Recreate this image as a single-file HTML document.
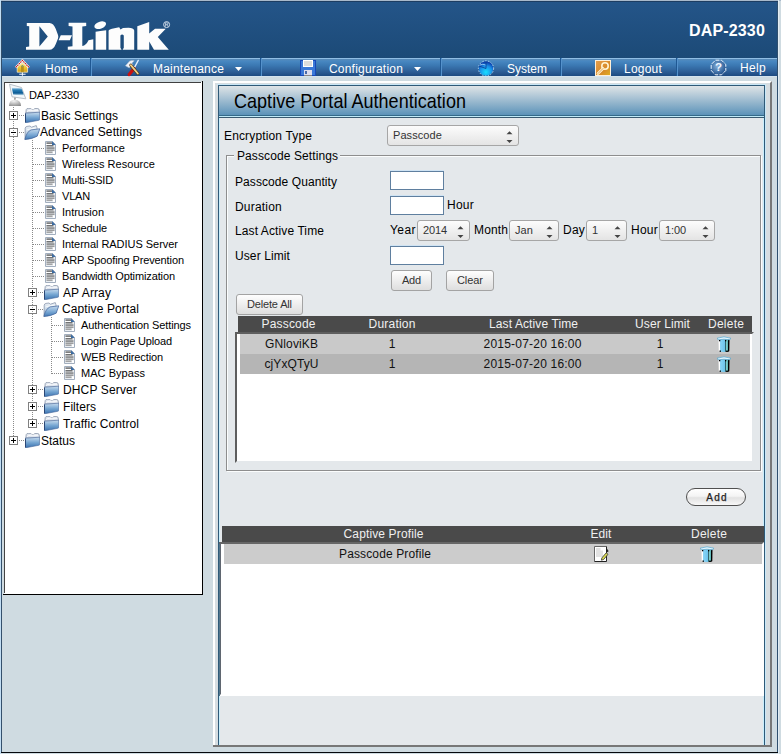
<!DOCTYPE html>
<html><head><meta charset="utf-8">
<style>
html,body{margin:0;padding:0;}
body{width:781px;height:754px;position:relative;overflow:hidden;background:#cfdbe1;font-family:"Liberation Sans",sans-serif;color:#000;}
.a{position:absolute;box-sizing:border-box;}
.t{position:absolute;white-space:nowrap;line-height:1;}
svg{position:absolute;overflow:visible;}
</style></head><body>

<div class="a" style="left:0px;top:0px;width:781px;height:1px;background:#a9b9cb"></div>
<div class="a" style="left:0px;top:0px;width:1px;height:754px;background:#c2def4"></div>
<div class="a" style="left:1px;top:1px;width:1px;height:752px;background:#34506c"></div>
<div class="a" style="left:777px;top:1px;width:1px;height:752px;background:#2f4f6e"></div>
<div class="a" style="left:778px;top:0px;width:1px;height:754px;background:#e2edf4"></div>
<div class="a" style="left:1px;top:752px;width:777px;height:1px;background:#05080c"></div>
<div class="a" style="left:2px;top:1px;width:775px;height:57px;background:linear-gradient(#245589,#1c4a77)"></div>
<div class="a" style="left:1px;top:1px;width:777px;height:1px;background:#1d3d62"></div>
<svg style="left:0;top:0" width="200" height="58" viewBox="0 0 200 58">
<g fill="#fdfdfd" fill-rule="evenodd">
<path d="M26.8 23 L49.5 23 Q53.5 23.2 55.8 29 L58 35 Q58.6 36.8 58 38.6 L55.8 44 Q53.5 49.8 49.5 49.8 L26 49.8 L26 47 L29.2 46.6 L29.2 26.3 L26.8 26 Z M39.4 26.3 L39.4 46.4 L47.8 36.5 Z"/>
<path d="M60.8 35.3 L72 35.3 L69.8 40.3 L58.6 40.3 Z"/>
<path d="M68.6 22.8 L86.2 22.8 L86.2 25.9 L82.3 26.4 L82.3 46 Q86 45.5 88.5 40.2 L93.3 39.3 L93.3 49.8 L67.8 49.8 L67.8 46.8 L72.5 46.3 L72.5 26.4 L68.6 25.9 Z"/>
<path d="M95.6 31.8 Q100 31 106.2 30.2 L106.2 49.8 L95.6 49.8 Z"/>
<ellipse cx="100.2" cy="25.2" rx="6.1" ry="3.5" transform="rotate(-20 100.2 25.2)"/>
<path d="M108.6 31 L108.6 49.7 L134.2 49.7 L134.2 30.5 Q133.5 27.8 128.5 27.8 L123 28 L120.5 29.5 L119.2 27.3 L112 28.8 Q108.6 29.5 108.6 31 Z M120.4 35.6 Q122.1 33.4 123.8 35.6 L123.8 47.8 L122.6 49.7 L121.6 49.7 L120.4 47.8 Z"/>
<path d="M137.3 26.3 L149.2 21.9 L149.2 33.5 L155 28.7 L165.8 28.7 L157.8 37 L168.8 49.7 L154 49.7 L149.2 41.5 L149.2 49.7 L137.3 49.7 Z"/>
</g>
<circle cx="166.6" cy="24.6" r="3" fill="none" stroke="#dfe8f2" stroke-width="0.9"/>
<path d="M165.4 26.6 L165.4 22.8 L167 22.8 Q168 22.9 168 23.8 Q168 24.7 167 24.7 L165.4 24.7 M166.8 24.7 L168 26.6" fill="none" stroke="#dfe8f2" stroke-width="0.7"/>
</svg>
<div class="t" style="left:689px;top:23px;font-size:16px;color:#fff;letter-spacing:0.156px;font-weight:bold">DAP-2330</div>
<div class="a" style="left:2px;top:58px;width:775px;height:18px;background:linear-gradient(#5a8ab6 1px,#4888c2 3px,#3c7ab4 7px,#2c5c94 14px,#1d4a80 18px)"></div>
<div class="a" style="left:2px;top:58px;width:775px;height:1px;background:#90bde3"></div>
<div class="a" style="left:2px;top:76px;width:775px;height:1px;background:#d4e3ee"></div>
<div class="a" style="left:90px;top:58px;width:1px;height:18px;background:#1f5893"></div>
<div class="a" style="left:91px;top:58px;width:1px;height:18px;background:#5592cc"></div>
<div class="a" style="left:260px;top:58px;width:1px;height:18px;background:#1f5893"></div>
<div class="a" style="left:261px;top:58px;width:1px;height:18px;background:#5592cc"></div>
<div class="a" style="left:440px;top:58px;width:1px;height:18px;background:#1f5893"></div>
<div class="a" style="left:441px;top:58px;width:1px;height:18px;background:#5592cc"></div>
<div class="a" style="left:560px;top:58px;width:1px;height:18px;background:#1f5893"></div>
<div class="a" style="left:561px;top:58px;width:1px;height:18px;background:#5592cc"></div>
<div class="a" style="left:676px;top:58px;width:1px;height:18px;background:#1f5893"></div>
<div class="a" style="left:677px;top:58px;width:1px;height:18px;background:#5592cc"></div>
<svg style="left:14px;top:59px" width="18" height="18" viewBox="0 0 18 18">
<defs><linearGradient id="ghouse" x1="0" y1="0" x2="0" y2="1"><stop offset="0" stop-color="#fff6c0"/><stop offset="0.45" stop-color="#f2cc40"/><stop offset="1" stop-color="#d49c10"/></linearGradient></defs>
<path d="M3.2 8 L3.2 13.2 L13.6 13.2 L13.6 8 L8.4 3.2 Z" fill="url(#ghouse)" stroke="#fff8d8" stroke-width="0.7"/>
<rect x="7" y="7" width="2.8" height="6.2" fill="#b8901a"/>
<rect x="7.6" y="6" width="1.6" height="2" fill="#8a9a70"/>
<path d="M1.8 8.4 L8.4 1.4 L15 8.4" fill="none" stroke="#fff" stroke-width="2.2" stroke-linejoin="miter"/>
<path d="M1.8 8.4 L8.4 1.4 L15 8.4" fill="none" stroke="#c01818" stroke-width="1.1" stroke-dasharray="1.6 0.6"/>
<path d="M5.2 15.2 L11.6 15.2 M8.4 13.4 L8.4 16.8" stroke="#eef4ff" stroke-width="1.1"/>
</svg>
<svg style="left:124px;top:59px" width="17" height="18" viewBox="0 0 17 18">
<path d="M14.2 1.5 L10.2 9" stroke="#e4f0ff" stroke-width="1.5" stroke-linecap="round"/>
<path d="M10 9.5 L5.2 15.6" stroke="#c81010" stroke-width="3.3" stroke-linecap="round"/>
<path d="M1.5 6.8 L5.5 2.2 Q8 0.8 10.2 1.8 L7.8 4.3 L8.8 5.3 L5.2 8.8 Z" fill="#eef2fa" stroke="#b4c0d0" stroke-width="0.6"/>
<path d="M6.8 6.2 L13.8 14.5" stroke="#4a3010" stroke-width="3" stroke-linecap="round"/>
<path d="M6.8 6.2 L13.8 14.5" stroke="#f2cf86" stroke-width="1.9" stroke-linecap="round"/>
</svg>
<svg style="left:300px;top:60px" width="16" height="16" viewBox="0 0 16 16">
<rect x="0" y="0" width="16" height="16" fill="#1848b8"/>
<rect x="1" y="1" width="14" height="14" fill="#3a78d8"/>
<rect x="3" y="0" width="10" height="7" fill="#fff"/>
<rect x="4" y="1" width="8" height="5" fill="#dcdcdc"/>
<rect x="4" y="10" width="8" height="6" fill="#dde"/>
<rect x="5" y="11" width="2" height="3" fill="#4a6aa8"/>
<rect x="4" y="15" width="8" height="1" fill="#888"/>
</svg>
<svg style="left:477px;top:60px" width="18" height="17" viewBox="0 0 18 17">
<defs><radialGradient id="gglobe" cx="0.5" cy="0.75" r="0.7"><stop offset="0" stop-color="#18e0ff"/><stop offset="0.6" stop-color="#1a90e8"/><stop offset="1" stop-color="#0a3aa8"/></radialGradient></defs>
<circle cx="9" cy="8.5" r="7.3" fill="url(#gglobe)"/>
<circle cx="9" cy="8.5" r="7.6" fill="none" stroke="#c8e8ff" stroke-width="0.9" stroke-dasharray="1.3 1.6"/>
<path d="M9 8.5 L9 1 M9 8.5 L2 6" stroke="#0a3a90" stroke-width="0.8"/>
<path d="M3 5 Q6 3.5 8.5 5" stroke="#a8e0ff" stroke-width="0.8" fill="none"/>
</svg>
<svg style="left:595px;top:60px" width="16" height="16" viewBox="0 0 16 16">
<defs><linearGradient id="gkey" x1="0" y1="0" x2="1" y2="1"><stop offset="0" stop-color="#e6a050"/><stop offset="0.6" stop-color="#d88a28"/><stop offset="1" stop-color="#e0b020"/></linearGradient></defs>
<rect x="0.5" y="0.5" width="15" height="15" fill="url(#gkey)" stroke="#fff0d8" stroke-width="1"/>
<circle cx="10" cy="6" r="3.2" fill="none" stroke="#fff4d4" stroke-width="1.6"/>
<path d="M8 8.5 L3 13.5" stroke="#fff4d4" stroke-width="2.6" stroke-linecap="round"/>
<path d="M8 8.5 L3 13.5" stroke="#e09a40" stroke-width="0.9" stroke-linecap="round"/>
</svg>
<svg style="left:710px;top:59px" width="17" height="17" viewBox="0 0 17 17">
<defs><radialGradient id="ghelp" cx="0.42" cy="0.4" r="0.7"><stop offset="0" stop-color="#86b2dc"/><stop offset="1" stop-color="#1a4a86"/></radialGradient></defs>
<circle cx="8.5" cy="8.5" r="7" fill="url(#ghelp)"/>
<polygon points="15.80,11.52 11.52,15.80 5.48,15.80 1.20,11.52 1.20,5.48 5.48,1.20 11.52,1.20 15.80,5.48" fill="none" stroke="#eef6ff" stroke-width="1" stroke-dasharray="4 1.2" stroke-dashoffset="1"/>
<text x="8.4" y="12.4" font-family="Liberation Sans" font-weight="bold" font-size="11.5" fill="#f4f8ff" text-anchor="middle">?</text>
</svg>
<div class="t" style="left:45px;top:63px;font-size:12px;color:#fff;letter-spacing:0.246px;">Home</div>
<div class="t" style="left:153px;top:63px;font-size:12px;color:#fff;letter-spacing:0.209px;">Maintenance</div>
<div class="t" style="left:329px;top:63px;font-size:12px;color:#fff;letter-spacing:0.202px;">Configuration</div>
<div class="t" style="left:507px;top:63px;font-size:12px;color:#fff;letter-spacing:0.000px;">System</div>
<div class="t" style="left:624px;top:63px;font-size:12px;color:#fff;letter-spacing:0.219px;">Logout</div>
<div class="t" style="left:740px;top:62px;font-size:12px;color:#fff;letter-spacing:0.328px;">Help</div>
<svg style="left:235px;top:67px" width="8" height="5"><path d="M0 0 L7 0 L3.5 4 Z" fill="#fff"/></svg>
<svg style="left:414px;top:67px" width="8" height="5"><path d="M0 0 L7 0 L3.5 4 Z" fill="#fff"/></svg>
<div class="a" style="left:4px;top:82px;width:198px;height:512px;background:#fff"></div>
<div class="a" style="left:4px;top:82px;width:197px;height:1px;background:#404040"></div>
<div class="a" style="left:4px;top:82px;width:1px;height:511px;background:#444"></div>
<div class="a" style="left:202px;top:81px;width:1px;height:514px;background:#000"></div>
<div class="a" style="left:3px;top:594px;width:200px;height:1px;background:#000"></div>
<svg width="0" height="0" style="position:absolute;left:0;top:0">
<defs>
<linearGradient id="gfold" x1="0" y1="0" x2="0" y2="1"><stop offset="0" stop-color="#c8dcee"/><stop offset="0.5" stop-color="#76a6d2"/><stop offset="1" stop-color="#3a72b0"/></linearGradient>
<linearGradient id="gfoldo" x1="0" y1="0" x2="0" y2="1"><stop offset="0" stop-color="#c8dcee"/><stop offset="0.55" stop-color="#7aa8d4"/><stop offset="1" stop-color="#3f78b4"/></linearGradient>
<linearGradient id="gfoldb" x1="0" y1="0" x2="0" y2="1"><stop offset="0" stop-color="#eef2f6"/><stop offset="1" stop-color="#9ab8d6"/></linearGradient>
<symbol id="fold" viewBox="0 0 15 15">
<path d="M0.8 5 L1.2 1.6 Q1.6 0.4 3.2 0.4 L5.8 0.4 L7 1.6 L8.6 1.6 L9.8 0.5 L12.8 0.5 Q14.3 0.7 14.4 2.6 L14.4 5 Z" fill="#dfe5ee" stroke="#7f8ca2" stroke-width="0.7"/>
<path d="M2.2 3.6 Q3 2.2 5.5 2.2 L13 2.2" fill="none" stroke="#ffffff" stroke-width="0.9"/>
<path d="M0.5 5.2 L14.6 4.2 L14.6 11.6 Q14.6 12.2 13.8 12.3 L1.1 14.7 Q0.5 14.8 0.5 14.2 Z" fill="url(#gfold)" stroke="#46679a" stroke-width="0.6"/>
<path d="M0.5 5.5 L0.5 14.5" stroke="#24406e" stroke-width="0.9"/>
</symbol>
<symbol id="foldo" viewBox="0 0 16 15">
<path d="M1 14 L1.2 3.2 Q1.5 1.6 3 1.4 L6 1 L7.4 2.2 L12.3 0.6 L13 3 L13.2 10.5 Z" fill="url(#gfoldb)" stroke="#7d8ba3" stroke-width="0.7"/>
<path d="M2.5 5 Q6 3.5 12.5 3" fill="none" stroke="#ffffff" stroke-width="0.8"/>
<path d="M0.8 14.6 Q2.8 6.4 7.2 4.9 L15.8 3.8 L13.2 11.2 Q8.5 13.9 0.8 14.6 Z" fill="url(#gfoldo)" stroke="#40629a" stroke-width="0.7"/>
</symbol>
<symbol id="page" viewBox="0 0 11 14">
<path d="M0.5 0.5 L7.5 0.5 L10.5 3.5 L10.5 13.5 L0.5 13.5 Z" fill="#e9edf1" stroke="#a2aebe" stroke-width="1"/>
<rect x="1" y="3" width="9" height="1" fill="#ffffff"/>
<rect x="1.5" y="1.5" width="5.5" height="1.2" fill="#4e4e4e"/>
<rect x="1.5" y="4.2" width="7" height="1.2" fill="#555"/>
<rect x="1.5" y="6.5" width="8" height="1.1" fill="#5a5a5a"/>
<rect x="1.5" y="8.6" width="8" height="1.1" fill="#7a7a7a"/>
<rect x="1.5" y="10.6" width="6" height="1.1" fill="#858585"/>
<rect x="8" y="10.5" width="2" height="2.5" fill="#fff"/>
<path d="M7 0.3 L10.7 4 L7 4 Z" fill="#3c6ca2"/>
</symbol>
<symbol id="plus" viewBox="0 0 9 9">
<rect x="0.5" y="0.5" width="8" height="8" fill="#fff" stroke="#808080"/>
<rect x="2" y="4" width="5" height="1" fill="#000"/><rect x="4" y="2" width="1" height="5" fill="#000"/>
</symbol>
<symbol id="minus" viewBox="0 0 9 9">
<rect x="0.5" y="0.5" width="8" height="8" fill="#fff" stroke="#808080"/>
<rect x="2" y="4" width="5" height="1" fill="#000"/><rect x="4" y="2" width="1" height="1" fill="#999"/><rect x="4" y="6" width="1" height="1" fill="#999"/>
</symbol>
<linearGradient id="gtrash" x1="0" y1="0" x2="1" y2="0"><stop offset="0" stop-color="#ffffff"/><stop offset="0.12" stop-color="#ffffff"/><stop offset="0.17" stop-color="#88d4f6"/><stop offset="0.6" stop-color="#6cc4ec"/><stop offset="0.64" stop-color="#2a5a60"/><stop offset="0.69" stop-color="#86d4d4"/><stop offset="0.85" stop-color="#5ab4b4"/><stop offset="0.9" stop-color="#000"/><stop offset="1" stop-color="#000"/></linearGradient>
<symbol id="trash" viewBox="0 0 14 17">
<path d="M1.5 3.5 L12.5 3.5 L12.3 15.2 Q7 16.8 1.8 15.2 Z" fill="url(#gtrash)"/>
<path d="M0.3 2.2 Q7 -0.6 13.7 2.2 L12.8 3.8 Q7 2.6 1.2 3.8 Z" fill="#e8f8ff" stroke="#4aa0cc" stroke-width="0.7"/>
<rect x="2" y="4" width="1.3" height="1.3" fill="#000"/><rect x="8" y="4" width="1.3" height="1.3" fill="#000"/>
<rect x="2.5" y="14.5" width="1.5" height="1.3" fill="#000"/><rect x="9" y="14.6" width="2.5" height="1.3" fill="#000"/>
</symbol>
<symbol id="edit" viewBox="0 0 15 16">
<path d="M0.5 15.5 L0.5 0.5 L12.5 0.5" fill="#fff" stroke="#666" stroke-width="1"/>
<rect x="1" y="1" width="11" height="14" fill="#fff"/>
<path d="M12.5 0.5 L12.5 15.5 L0.5 15.5" fill="none" stroke="#222" stroke-width="1"/>
<path d="M2 2 L6.5 2 L6.5 4.5 L9 4.5 L9 11 L2 11 Z" fill="#e2e2e2"/>
<path d="M12.5 3 L13.8 4.8 L13.5 6" stroke="#222" stroke-width="1.2" fill="none"/>
<path d="M7.8 12 L12.2 6.8 L14 8.3 L9.6 13.5 L7.4 14.2 Z" fill="#dada50" stroke="#333" stroke-width="0.8"/>
</symbol>
</defs></svg>
<svg style="left:8px;top:83px" width="20" height="24" viewBox="0 0 20 24">
<defs><linearGradient id="gscr" x1="0" y1="0" x2="0" y2="1"><stop offset="0" stop-color="#e8f4fc"/><stop offset="0.3" stop-color="#2a80b8"/><stop offset="0.7" stop-color="#0a5a94"/><stop offset="1" stop-color="#d8eef8"/></linearGradient>
<radialGradient id="gdome" cx="0.4" cy="0.2" r="0.9"><stop offset="0" stop-color="#f4f4f4"/><stop offset="1" stop-color="#8a8a8a"/></radialGradient></defs>
<path d="M1.5 1.2 L13.5 4.5 L17.8 15.8 L4 13.8 Z" fill="#f4f8fb" stroke="#b8c0c8" stroke-width="1"/>
<path d="M3.8 4.4 L13.5 5.3 L16 12.5 L5.2 11.8 Z" fill="url(#gscr)"/>
<path d="M6 14.5 L8 14.8 L7.2 17.5 L6.4 17.5 Z" fill="#999"/>
<path d="M1 23 Q1 16.5 7 16.8 Q13 17 13 23 Z" fill="url(#gdome)"/>
</svg>
<div class="t" style="left:29px;top:90px;font-size:11px;color:#000;letter-spacing:-0.098px;">DAP-2330</div>
<div class="a" style="left:13px;top:107px;width:1px;height:329px;background:repeating-linear-gradient(to bottom,#8a8a8a 0 1px,transparent 1px 2px)"></div>
<svg style="left:9px;top:111px" width="9" height="9" viewBox="0 0 9 9"><use href="#plus" width="9" height="9"/></svg>
<div class="a" style="left:19px;top:115px;width:6px;height:1px;background:repeating-linear-gradient(to right,#8a8a8a 0 1px,transparent 1px 2px)"></div>
<svg style="left:25px;top:108px" width="15" height="15" viewBox="0 0 15 15"><use href="#fold" width="15" height="15"/></svg>
<div class="t" style="left:41px;top:110px;font-size:12px;color:#000;letter-spacing:0.070px;">Basic Settings</div>
<svg style="left:9px;top:128px" width="9" height="9" viewBox="0 0 9 9"><use href="#minus" width="9" height="9"/></svg>
<div class="a" style="left:19px;top:132px;width:6px;height:1px;background:repeating-linear-gradient(to right,#8a8a8a 0 1px,transparent 1px 2px)"></div>
<svg style="left:24px;top:125px" width="16" height="15" viewBox="0 0 16 15"><use href="#foldo" width="16" height="15"/></svg>
<div class="t" style="left:40px;top:126px;font-size:12px;color:#000;letter-spacing:0.116px;">Advanced Settings</div>
<div class="a" style="left:32px;top:140px;width:1px;height:280px;background:repeating-linear-gradient(to bottom,#8a8a8a 0 1px,transparent 1px 2px)"></div>
<div class="a" style="left:33px;top:148px;width:12px;height:1px;background:repeating-linear-gradient(to right,#8a8a8a 0 1px,transparent 1px 2px)"></div>
<svg style="left:45px;top:141px" width="11" height="14" viewBox="0 0 11 14"><use href="#page" width="11" height="14"/></svg>
<div class="t" style="left:62px;top:143px;font-size:11px;color:#000;letter-spacing:0.000px;">Performance</div>
<div class="a" style="left:33px;top:164px;width:12px;height:1px;background:repeating-linear-gradient(to right,#8a8a8a 0 1px,transparent 1px 2px)"></div>
<svg style="left:45px;top:157px" width="11" height="14" viewBox="0 0 11 14"><use href="#page" width="11" height="14"/></svg>
<div class="t" style="left:62px;top:159px;font-size:11px;color:#000;letter-spacing:0.040px;">Wireless Resource</div>
<div class="a" style="left:33px;top:180px;width:12px;height:1px;background:repeating-linear-gradient(to right,#8a8a8a 0 1px,transparent 1px 2px)"></div>
<svg style="left:45px;top:173px" width="11" height="14" viewBox="0 0 11 14"><use href="#page" width="11" height="14"/></svg>
<div class="t" style="left:62px;top:175px;font-size:11px;color:#000;letter-spacing:-0.156px;">Multi-SSID</div>
<div class="a" style="left:33px;top:196px;width:12px;height:1px;background:repeating-linear-gradient(to right,#8a8a8a 0 1px,transparent 1px 2px)"></div>
<svg style="left:45px;top:189px" width="11" height="14" viewBox="0 0 11 14"><use href="#page" width="11" height="14"/></svg>
<div class="t" style="left:62px;top:191px;font-size:11px;color:#000;letter-spacing:-0.188px;">VLAN</div>
<div class="a" style="left:33px;top:212px;width:12px;height:1px;background:repeating-linear-gradient(to right,#8a8a8a 0 1px,transparent 1px 2px)"></div>
<svg style="left:45px;top:205px" width="11" height="14" viewBox="0 0 11 14"><use href="#page" width="11" height="14"/></svg>
<div class="t" style="left:62px;top:207px;font-size:11px;color:#000;letter-spacing:-0.024px;">Intrusion</div>
<div class="a" style="left:33px;top:228px;width:12px;height:1px;background:repeating-linear-gradient(to right,#8a8a8a 0 1px,transparent 1px 2px)"></div>
<svg style="left:45px;top:221px" width="11" height="14" viewBox="0 0 11 14"><use href="#page" width="11" height="14"/></svg>
<div class="t" style="left:62px;top:223px;font-size:11px;color:#000;letter-spacing:-0.113px;">Schedule</div>
<div class="a" style="left:33px;top:244px;width:12px;height:1px;background:repeating-linear-gradient(to right,#8a8a8a 0 1px,transparent 1px 2px)"></div>
<svg style="left:45px;top:237px" width="11" height="14" viewBox="0 0 11 14"><use href="#page" width="11" height="14"/></svg>
<div class="t" style="left:62px;top:239px;font-size:11px;color:#000;letter-spacing:-0.037px;">Internal RADIUS Server</div>
<div class="a" style="left:33px;top:260px;width:12px;height:1px;background:repeating-linear-gradient(to right,#8a8a8a 0 1px,transparent 1px 2px)"></div>
<svg style="left:45px;top:253px" width="11" height="14" viewBox="0 0 11 14"><use href="#page" width="11" height="14"/></svg>
<div class="t" style="left:62px;top:255px;font-size:11px;color:#000;letter-spacing:-0.115px;">ARP Spoofing Prevention</div>
<div class="a" style="left:33px;top:276px;width:12px;height:1px;background:repeating-linear-gradient(to right,#8a8a8a 0 1px,transparent 1px 2px)"></div>
<svg style="left:45px;top:269px" width="11" height="14" viewBox="0 0 11 14"><use href="#page" width="11" height="14"/></svg>
<div class="t" style="left:62px;top:271px;font-size:11px;color:#000;letter-spacing:-0.119px;">Bandwidth Optimization</div>
<svg style="left:28px;top:288px" width="9" height="9" viewBox="0 0 9 9"><use href="#plus" width="9" height="9"/></svg>
<div class="a" style="left:38px;top:292px;width:6px;height:1px;background:repeating-linear-gradient(to right,#8a8a8a 0 1px,transparent 1px 2px)"></div>
<svg style="left:44px;top:285px" width="15" height="15" viewBox="0 0 15 15"><use href="#fold" width="15" height="15"/></svg>
<div class="t" style="left:63px;top:287px;font-size:12px;color:#000;letter-spacing:0.109px;">AP Array</div>
<svg style="left:28px;top:305px" width="9" height="9" viewBox="0 0 9 9"><use href="#minus" width="9" height="9"/></svg>
<div class="a" style="left:38px;top:309px;width:6px;height:1px;background:repeating-linear-gradient(to right,#8a8a8a 0 1px,transparent 1px 2px)"></div>
<svg style="left:43px;top:302px" width="16" height="15" viewBox="0 0 16 15"><use href="#foldo" width="16" height="15"/></svg>
<div class="t" style="left:62px;top:303px;font-size:12px;color:#000;letter-spacing:0.117px;">Captive Portal</div>
<div class="a" style="left:51px;top:317px;width:1px;height:57px;background:repeating-linear-gradient(to bottom,#8a8a8a 0 1px,transparent 1px 2px)"></div>
<div class="a" style="left:52px;top:325px;width:12px;height:1px;background:repeating-linear-gradient(to right,#8a8a8a 0 1px,transparent 1px 2px)"></div>
<svg style="left:64px;top:318px" width="11" height="14" viewBox="0 0 11 14"><use href="#page" width="11" height="14"/></svg>
<div class="t" style="left:81px;top:320px;font-size:11px;color:#000;letter-spacing:-0.114px;">Authentication Settings</div>
<div class="a" style="left:52px;top:341px;width:12px;height:1px;background:repeating-linear-gradient(to right,#8a8a8a 0 1px,transparent 1px 2px)"></div>
<svg style="left:64px;top:334px" width="11" height="14" viewBox="0 0 11 14"><use href="#page" width="11" height="14"/></svg>
<div class="t" style="left:81px;top:336px;font-size:11px;color:#000;letter-spacing:-0.156px;">Login Page Upload</div>
<div class="a" style="left:52px;top:357px;width:12px;height:1px;background:repeating-linear-gradient(to right,#8a8a8a 0 1px,transparent 1px 2px)"></div>
<svg style="left:64px;top:350px" width="11" height="14" viewBox="0 0 11 14"><use href="#page" width="11" height="14"/></svg>
<div class="t" style="left:81px;top:352px;font-size:11px;color:#000;letter-spacing:-0.119px;">WEB Redirection</div>
<div class="a" style="left:52px;top:373px;width:12px;height:1px;background:repeating-linear-gradient(to right,#8a8a8a 0 1px,transparent 1px 2px)"></div>
<svg style="left:64px;top:366px" width="11" height="14" viewBox="0 0 11 14"><use href="#page" width="11" height="14"/></svg>
<div class="t" style="left:81px;top:368px;font-size:11px;color:#000;letter-spacing:0.041px;">MAC Bypass</div>
<svg style="left:28px;top:385px" width="9" height="9" viewBox="0 0 9 9"><use href="#plus" width="9" height="9"/></svg>
<div class="a" style="left:38px;top:389px;width:6px;height:1px;background:repeating-linear-gradient(to right,#8a8a8a 0 1px,transparent 1px 2px)"></div>
<svg style="left:44px;top:382px" width="15" height="15" viewBox="0 0 15 15"><use href="#fold" width="15" height="15"/></svg>
<div class="t" style="left:63px;top:384px;font-size:12px;color:#000;letter-spacing:0.139px;">DHCP Server</div>
<svg style="left:28px;top:402px" width="9" height="9" viewBox="0 0 9 9"><use href="#plus" width="9" height="9"/></svg>
<div class="a" style="left:38px;top:406px;width:6px;height:1px;background:repeating-linear-gradient(to right,#8a8a8a 0 1px,transparent 1px 2px)"></div>
<svg style="left:44px;top:399px" width="15" height="15" viewBox="0 0 15 15"><use href="#fold" width="15" height="15"/></svg>
<div class="t" style="left:63px;top:401px;font-size:12px;color:#000;letter-spacing:0.047px;">Filters</div>
<svg style="left:28px;top:419px" width="9" height="9" viewBox="0 0 9 9"><use href="#plus" width="9" height="9"/></svg>
<div class="a" style="left:38px;top:423px;width:6px;height:1px;background:repeating-linear-gradient(to right,#8a8a8a 0 1px,transparent 1px 2px)"></div>
<svg style="left:44px;top:416px" width="15" height="15" viewBox="0 0 15 15"><use href="#fold" width="15" height="15"/></svg>
<div class="t" style="left:63px;top:418px;font-size:12px;color:#000;letter-spacing:0.087px;">Traffic Control</div>
<svg style="left:9px;top:436px" width="9" height="9" viewBox="0 0 9 9"><use href="#plus" width="9" height="9"/></svg>
<div class="a" style="left:19px;top:440px;width:6px;height:1px;background:repeating-linear-gradient(to right,#8a8a8a 0 1px,transparent 1px 2px)"></div>
<svg style="left:25px;top:433px" width="15" height="15" viewBox="0 0 15 15"><use href="#fold" width="15" height="15"/></svg>
<div class="t" style="left:41px;top:435px;font-size:12px;color:#000;letter-spacing:0.000px;">Status</div>
<div class="a" style="left:213px;top:81px;width:559px;height:666px;border:2px solid;border-color:#fff #777 #777 #fff;background:#d6dde1"></div>
<div class="a" style="left:217px;top:84px;width:549px;height:1px;background:#c8e6f6"></div>
<div class="a" style="left:765px;top:85px;width:1px;height:661px;background:#c8e8f8"></div>
<div class="a" style="left:218px;top:85px;width:547px;height:661px;background:#2f5a78"></div>
<div class="a" style="left:219px;top:86px;width:545px;height:660px;background:#c8eefc"></div>
<div class="a" style="left:220px;top:118px;width:543px;height:627px;background:#e4e8eb"></div>
<div class="a" style="left:219px;top:86px;width:545px;height:29px;background:linear-gradient(#dfe4e7,#5c93b9)"></div>
<div class="a" style="left:219px;top:115px;width:545px;height:1px;background:#346a8a"></div>
<div class="a" style="left:219px;top:116px;width:545px;height:1px;background:#c0eaf8"></div>
<div class="a" style="left:219px;top:117px;width:545px;height:1px;background:#3a5a70"></div>
<div class="a" style="left:213px;top:745px;width:559px;height:2px;background:#777"></div>
<div class="t" style="left:234px;top:93px;font-size:18px;color:#000;letter-spacing:0.028px;transform:scaleY(1.08);transform-origin:0 15px">Captive Portal Authentication</div>
<div class="t" style="left:224px;top:130px;font-size:12px;color:#000;letter-spacing:0.146px;">Encryption Type</div>
<div class="a" style="left:387px;top:125px;width:132px;height:21px;border:1px solid #a6a6a6;border-radius:3px;background:linear-gradient(#fcfcfc,#e4e4e4)"></div>
<svg style="left:506px;top:131px" width="7" height="13"><path d="M0.5 3.2 L3.5 0.2 L6.5 3.2 Z" fill="#444"/><path d="M0.5 9 L3.5 12 L6.5 9 Z" fill="#444"/></svg>
<div class="t" style="left:393px;top:130px;font-size:11px;color:#333;letter-spacing:0.082px;">Passcode</div>
<div class="a" style="left:226px;top:155px;width:535px;height:316px;border:1px solid #8e8e8e;border-right-color:#8e8e8e"></div>
<div class="a" style="left:227px;top:156px;width:535px;height:316px;border:1px solid #fbfdfd;border-left:none;border-top:none"></div>
<div class="a" style="left:227px;top:156px;width:533px;height:314px;border:1px solid #fbfdfd;border-right:none;border-bottom:none"></div>
<div class="a" style="left:234px;top:150px;width:106px;height:12px;background:#e4e8eb"></div>
<div class="t" style="left:237px;top:150px;font-size:12px;color:#000;letter-spacing:0.097px;">Passcode Settings</div>
<div class="t" style="left:235px;top:176px;font-size:12px;color:#000;letter-spacing:0.077px;">Passcode Quantity</div>
<div class="t" style="left:235px;top:201px;font-size:12px;color:#000;letter-spacing:0.205px;">Duration</div>
<div class="t" style="left:235px;top:225px;font-size:12px;color:#000;letter-spacing:0.103px;">Last Active Time</div>
<div class="t" style="left:235px;top:250px;font-size:12px;color:#000;letter-spacing:0.098px;">User Limit</div>
<div class="a" style="left:390px;top:171px;width:54px;height:19px;border:1px solid #5f7f9f;background:#fff"></div>
<div class="a" style="left:390px;top:170px;width:54px;height:1px;background:#cfe3f3"></div>
<div class="a" style="left:390px;top:196px;width:54px;height:19px;border:1px solid #5f7f9f;background:#fff"></div>
<div class="a" style="left:390px;top:195px;width:54px;height:1px;background:#cfe3f3"></div>
<div class="a" style="left:390px;top:246px;width:54px;height:19px;border:1px solid #5f7f9f;background:#fff"></div>
<div class="a" style="left:390px;top:245px;width:54px;height:1px;background:#cfe3f3"></div>
<div class="t" style="left:447px;top:199px;font-size:12px;color:#000;letter-spacing:0.246px;">Hour</div>
<div class="t" style="left:390px;top:224px;font-size:12px;color:#000;letter-spacing:0.438px;">Year</div>
<div class="a" style="left:417px;top:220px;width:53px;height:21px;border:1px solid #a6a6a6;border-radius:3px;background:linear-gradient(#fcfcfc,#e4e4e4)"></div>
<svg style="left:457px;top:226px" width="7" height="13"><path d="M0.5 3.2 L3.5 0.2 L6.5 3.2 Z" fill="#444"/><path d="M0.5 9 L3.5 12 L6.5 9 Z" fill="#444"/></svg>
<div class="t" style="left:423px;top:225px;font-size:11px;color:#333;letter-spacing:-0.125px;">2014</div>
<div class="t" style="left:474px;top:224px;font-size:12px;color:#000;letter-spacing:0.131px;">Month</div>
<div class="a" style="left:509px;top:220px;width:50px;height:21px;border:1px solid #a6a6a6;border-radius:3px;background:linear-gradient(#fcfcfc,#e4e4e4)"></div>
<svg style="left:546px;top:226px" width="7" height="13"><path d="M0.5 3.2 L3.5 0.2 L6.5 3.2 Z" fill="#444"/><path d="M0.5 9 L3.5 12 L6.5 9 Z" fill="#444"/></svg>
<div class="t" style="left:515px;top:225px;font-size:11px;color:#333;letter-spacing:0.083px;">Jan</div>
<div class="t" style="left:563px;top:224px;font-size:12px;color:#000;letter-spacing:0.219px;">Day</div>
<div class="a" style="left:586px;top:220px;width:41px;height:21px;border:1px solid #a6a6a6;border-radius:3px;background:linear-gradient(#fcfcfc,#e4e4e4)"></div>
<svg style="left:614px;top:226px" width="7" height="13"><path d="M0.5 3.2 L3.5 0.2 L6.5 3.2 Z" fill="#444"/><path d="M0.5 9 L3.5 12 L6.5 9 Z" fill="#444"/></svg>
<div class="t" style="left:592px;top:225px;font-size:11px;color:#333;letter-spacing:-0.125px;">1</div>
<div class="t" style="left:631px;top:224px;font-size:12px;color:#000;letter-spacing:0.246px;">Hour</div>
<div class="a" style="left:659px;top:220px;width:56px;height:21px;border:1px solid #a6a6a6;border-radius:3px;background:linear-gradient(#fcfcfc,#e4e4e4)"></div>
<svg style="left:702px;top:226px" width="7" height="13"><path d="M0.5 3.2 L3.5 0.2 L6.5 3.2 Z" fill="#444"/><path d="M0.5 9 L3.5 12 L6.5 9 Z" fill="#444"/></svg>
<div class="t" style="left:665px;top:225px;font-size:11px;color:#333;letter-spacing:-0.109px;">1:00</div>
<div class="a" style="left:391px;top:270px;width:41px;height:21px;border:1px solid #a3a3a3;border-radius:3px;background:linear-gradient(#fefefe,#dedede);text-align:center"></div>
<div class="t" style="left:261.5px;width:300px;text-align:center;top:275px;font-size:11px;color:#333;letter-spacing:-0.198px;text-indent:-0.198px;">Add</div>
<div class="a" style="left:446px;top:270px;width:48px;height:21px;border:1px solid #a3a3a3;border-radius:3px;background:linear-gradient(#fefefe,#dedede);text-align:center"></div>
<div class="t" style="left:320.0px;width:300px;text-align:center;top:275px;font-size:11px;color:#333;letter-spacing:-0.056px;text-indent:-0.056px;">Clear</div>
<div class="a" style="left:236px;top:294px;width:67px;height:21px;border:1px solid #a3a3a3;border-radius:3px;background:linear-gradient(#fefefe,#dedede);text-align:center"></div>
<div class="t" style="left:119.5px;width:300px;text-align:center;top:299px;font-size:11px;color:#333;letter-spacing:-0.148px;text-indent:-0.148px;">Delete All</div>
<div class="a" style="left:238px;top:316px;width:514px;height:16px;background:#4a4a4a"></div>
<div class="t" style="left:138.5px;width:300px;text-align:center;top:318px;font-size:12px;color:#f0f0f0;letter-spacing:0.164px;text-indent:0.164px;">Passcode</div>
<div class="t" style="left:242px;width:300px;text-align:center;top:318px;font-size:12px;color:#f0f0f0;letter-spacing:0.205px;text-indent:0.205px;">Duration</div>
<div class="t" style="left:383.5px;width:300px;text-align:center;top:318px;font-size:12px;color:#f0f0f0;letter-spacing:0.103px;text-indent:0.103px;">Last Active Time</div>
<div class="t" style="left:512.5px;width:300px;text-align:center;top:318px;font-size:12px;color:#f0f0f0;letter-spacing:0.098px;text-indent:0.098px;">User Limit</div>
<div class="t" style="left:576px;width:300px;text-align:center;top:318px;font-size:12px;color:#f0f0f0;letter-spacing:0.219px;text-indent:0.219px;">Delete</div>
<div class="a" style="left:235px;top:332px;width:519px;height:131px;background:#fff;border:2px solid;border-color:#5e5e5e #e4e8eb #e4e8eb #5e5e5e"></div>
<div class="a" style="left:240px;top:334px;width:510px;height:20px;background:#c9c9c9"></div>
<div class="a" style="left:240px;top:354px;width:510px;height:20px;background:#b5b5b5"></div>
<div class="t" style="left:141.5px;width:300px;text-align:center;top:338px;font-size:12px;color:#111;letter-spacing:0.123px;text-indent:0.123px;">GNloviKB</div>
<div class="t" style="left:242px;width:300px;text-align:center;top:338px;font-size:12px;color:#111;letter-spacing:0.328px;text-indent:0.328px;">1</div>
<div class="t" style="left:382.5px;width:300px;text-align:center;top:338px;font-size:12px;color:#111;letter-spacing:0.205px;text-indent:0.205px;">2015-07-20 16:00</div>
<div class="t" style="left:510px;width:300px;text-align:center;top:338px;font-size:12px;color:#111;letter-spacing:0.328px;text-indent:0.328px;">1</div>
<svg style="left:717px;top:336px" width="14" height="17" viewBox="0 0 14 17"><use href="#trash" width="14" height="17"/></svg>
<div class="t" style="left:141.5px;width:300px;text-align:center;top:358px;font-size:12px;color:#111;letter-spacing:0.082px;text-indent:0.082px;">cjYxQTyU</div>
<div class="t" style="left:242px;width:300px;text-align:center;top:358px;font-size:12px;color:#111;letter-spacing:0.328px;text-indent:0.328px;">1</div>
<div class="t" style="left:382.5px;width:300px;text-align:center;top:358px;font-size:12px;color:#111;letter-spacing:0.205px;text-indent:0.205px;">2015-07-20 16:00</div>
<div class="t" style="left:510px;width:300px;text-align:center;top:358px;font-size:12px;color:#111;letter-spacing:0.328px;text-indent:0.328px;">1</div>
<svg style="left:717px;top:356px" width="14" height="17" viewBox="0 0 14 17"><use href="#trash" width="14" height="17"/></svg>
<div class="a" style="left:686px;top:488px;width:60px;height:18px;border:1px solid #505050;border-radius:9px;background:linear-gradient(#ffffff 0%,#f4f4f4 45%,#e2e2e2 55%,#f8f8f8 100%)"></div>
<div class="t" style="left:567px;width:300px;text-align:center;top:493px;font-size:10px;color:#222;letter-spacing:1.2px;-webkit-text-stroke:0.25px #222">Add</div>
<div class="a" style="left:222px;top:526px;width:542px;height:16px;background:#4a4a4a"></div>
<div class="t" style="left:233.5px;width:300px;text-align:center;top:528px;font-size:12px;color:#f0f0f0;letter-spacing:0.131px;text-indent:0.131px;">Captive Profile</div>
<div class="t" style="left:451px;width:300px;text-align:center;top:528px;font-size:12px;color:#f0f0f0;letter-spacing:0.082px;text-indent:0.082px;">Edit</div>
<div class="t" style="left:559px;width:300px;text-align:center;top:528px;font-size:12px;color:#f0f0f0;letter-spacing:0.219px;text-indent:0.219px;">Delete</div>
<div class="a" style="left:219px;top:542px;width:545px;height:154px;background:#fff;border:2px solid;border-color:#666 #fff #fff #5f6670"></div>
<div class="a" style="left:219px;top:544px;width:1px;height:152px;background:#52758c"></div>
<div class="a" style="left:224px;top:544px;width:538px;height:20px;background:#cccccc"></div>
<div class="t" style="left:235px;width:300px;text-align:center;top:548px;font-size:12px;color:#111;letter-spacing:0.123px;text-indent:0.123px;">Passcode Profile</div>
<svg style="left:594px;top:546px" width="15" height="16" viewBox="0 0 15 16"><use href="#edit" width="15" height="16"/></svg>
<svg style="left:700px;top:546px" width="14" height="17" viewBox="0 0 14 17"><use href="#trash" width="14" height="17"/></svg>
</body></html>
